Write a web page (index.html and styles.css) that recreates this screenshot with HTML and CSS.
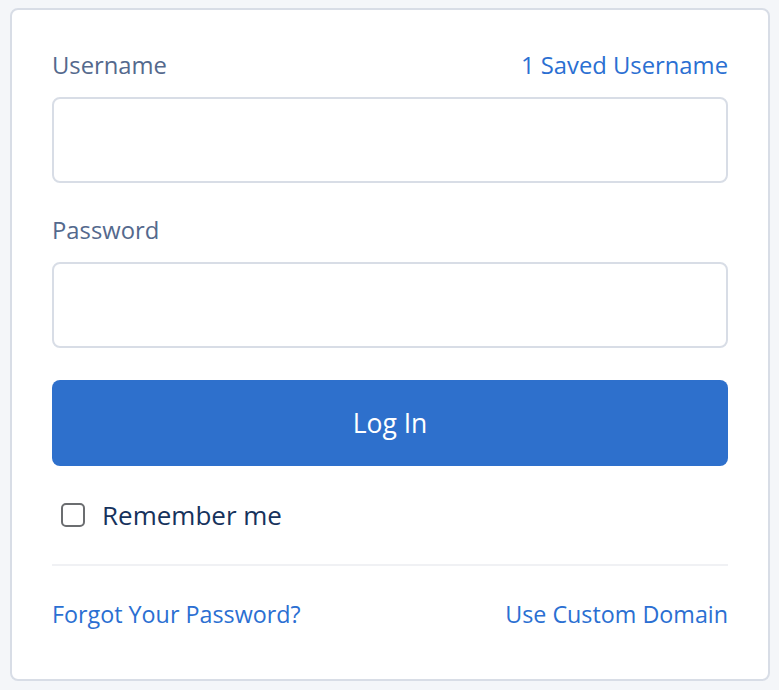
FILE: index.html
```html
<!DOCTYPE html>
<html>
<head>
<meta charset="utf-8">
<link rel="stylesheet" href="styles.css">
</head>
<body>
<div class="card">
  <div class="label-row">
    <span class="label">Username</span>
    <a class="link" href="#">1 Saved Username</a>
  </div>
  <div class="input"></div>
  <div class="label-row pw">
    <span class="label">Password</span>
  </div>
  <div class="input"></div>
  <button class="btn">Log In</button>
  <label class="remember">
    <span class="box"></span>
    <span class="remember-text">Remember me</span>
  </label>
  <div class="divider"></div>
  <div class="links">
    <a class="link" href="#">Forgot Your Password?</a>
    <a class="link" href="#">Use Custom Domain</a>
  </div>
</div>
</body>
</html>
```
FILE: styles.css
```css
html, body {
  margin: 0;
  padding: 0;
  background: #f4f6f9;
  height: 100%;
}
body {
  font-family: "Open Sans", "Noto Sans", sans-serif;
  padding: 8px 0 0 10px;
  box-sizing: border-box;
}
.card {
  width: 760px;
  height: 673px;
  box-sizing: border-box;
  background: #fff;
  border: 2px solid #d8dde6;
  border-radius: 8px;
  padding: 37px 40px 0 40px;
}
.label-row {
  display: flex;
  justify-content: space-between;
  align-items: center;
  height: 36px;
  margin-bottom: 14px;
}
.label-row.pw {
  margin-top: 29px;
}
.label {
  font-size: 23.8px;
  color: #54698d;
}
.link {
  font-size: 23.8px;
  color: #2b6fd2;
  text-decoration: none;
}
.input {
  height: 86px;
  box-sizing: border-box;
  border: 2px solid #d8dde6;
  border-radius: 8px;
  background: #fff;
}
.btn {
  display: block;
  width: 100%;
  height: 86px;
  margin-top: 32px;
  border: none;
  border-radius: 8px;
  background: #2e70cc;
  color: #fff;
  font-family: inherit;
  font-size: 26.5px;
}
.remember {
  display: flex;
  align-items: center;
  gap: 17px;
  margin-top: 25px;
  padding-left: 9px;
  height: 48px;
}
.box {
  width: 24px;
  height: 24px;
  box-sizing: border-box;
  border: 2px solid #6b6d70;
  border-radius: 5px;
}
.remember-text {
  font-size: 26px;
  color: #16325c;
}
.divider {
  height: 2px;
  background: #f0f1f4;
  margin-top: 25px;
}
.links {
  display: flex;
  justify-content: space-between;
  align-items: center;
  margin-top: 28px;
  height: 40px;
}
.links .link {
  font-size: 23.3px;
}
```
